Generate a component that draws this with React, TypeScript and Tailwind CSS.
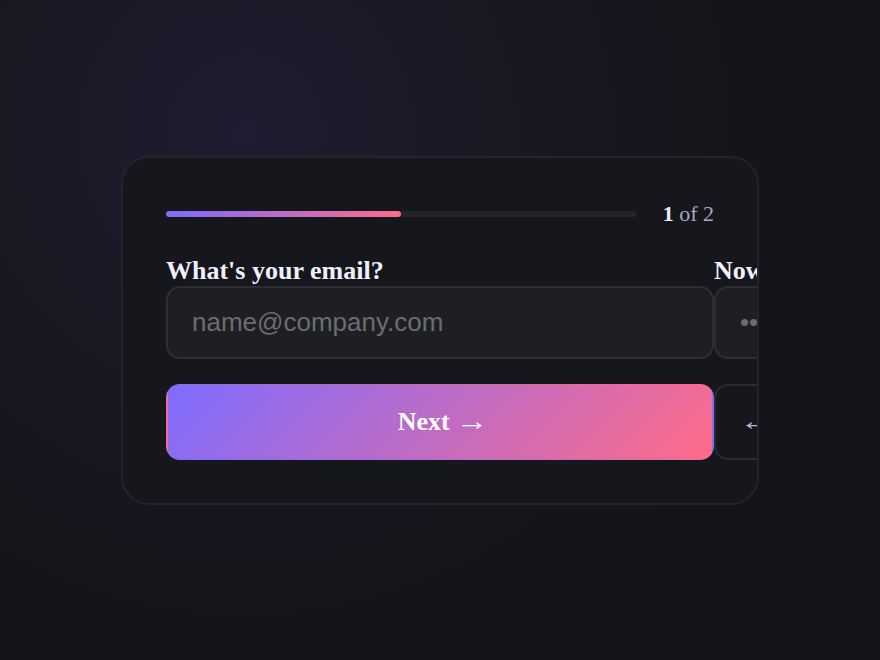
import React, { useState } from 'react';

const serif = { fontFamily: '"Liberation Serif", "Times New Roman", serif' };

export default function App() {
  const [step, setStep] = useState(0);
  const [email, setEmail] = useState('');
  const [password, setPassword] = useState('');

  return (
    <div
      className="min-h-screen flex items-center justify-center bg-[#131319] bg-[radial-gradient(circle_at_28%_20%,#1e1d31_0%,#17171f_40%,#131319_72%)]"
      style={serif}
    >
      <div className="w-[638px] rounded-[28px] border-2 border-[#23232a] bg-[#16161d] p-[43px] overflow-hidden">
        {/* progress */}
        <div className="flex items-center gap-[26px] h-[26px]">
          <div className="flex-1 h-[6px] rounded-full bg-[#23232a]">
            <div
              className="h-full rounded-full bg-[linear-gradient(90deg,#7c6cff,#ff6b8a)]"
              style={{ width: `${(step + 1) * 50}%` }}
            />
          </div>
          <span className="text-[22px] leading-none text-[#a9a7c2]">
            <b className="text-[#ecebf7]">{step + 1}</b> of 2
          </span>
        </div>

        {/* steps */}
        <div className="mt-[29px] flex" style={{ transform: `translateX(-${step * 100}%)` }}>
          <div className="w-full shrink-0">
            <label className="block text-[26px] font-bold leading-[30px] text-[#f1effc]">What's your email?</label>
            <input
              type="email"
              value={email}
              onChange={(e) => setEmail(e.target.value)}
              placeholder="name@company.com"
              className="block w-full h-[73px] rounded-[14px] border-2 border-[#2e2f35] bg-[#1e1f23] px-6 text-[26px] text-[#e8e8ee] placeholder:text-[#6c6c73] outline-none font-['Liberation_Sans',Arial,sans-serif]"
            />
            <button
              onClick={() => setStep(1)}
              className="mt-[25px] w-full h-[76px] rounded-[14px] border-2 border-transparent bg-[linear-gradient(135deg,#7d6cff,#ff6b88)] text-[26px] font-bold text-white"
            >
              Next <span className="inline-block origin-left scale-x-[1.25] font-normal">→</span>
            </button>
          </div>

          <div className="w-full shrink-0">
            <label className="block text-[26px] font-bold leading-[30px] text-[#f1effc]">Now pick a password</label>
            <input
              type="password"
              value={password}
              onChange={(e) => setPassword(e.target.value)}
              placeholder="••••••••"
              className="block w-full h-[73px] rounded-[14px] border-2 border-[#2e2f35] bg-[#1e1f23] px-6 text-[26px] text-[#e8e8ee] placeholder:text-[#6c6c73] outline-none font-['Liberation_Sans',Arial,sans-serif]"
            />
            <div className="mt-[25px] flex gap-3">
              <button
                onClick={() => setStep(0)}
                className="h-[76px] rounded-[14px] border-2 border-[#2a2a31] bg-transparent px-7 text-[26px] text-[#b9b7d2]"
              >
                <span className="inline-block scale-x-[1.35]">←</span>
              </button>
              <button className="flex-1 h-[76px] rounded-[14px] border-2 border-transparent bg-[linear-gradient(135deg,#7d6cff,#ff6b88)] text-[26px] font-bold text-white">
                Create account
              </button>
            </div>
          </div>
        </div>
      </div>
    </div>
  );
}
